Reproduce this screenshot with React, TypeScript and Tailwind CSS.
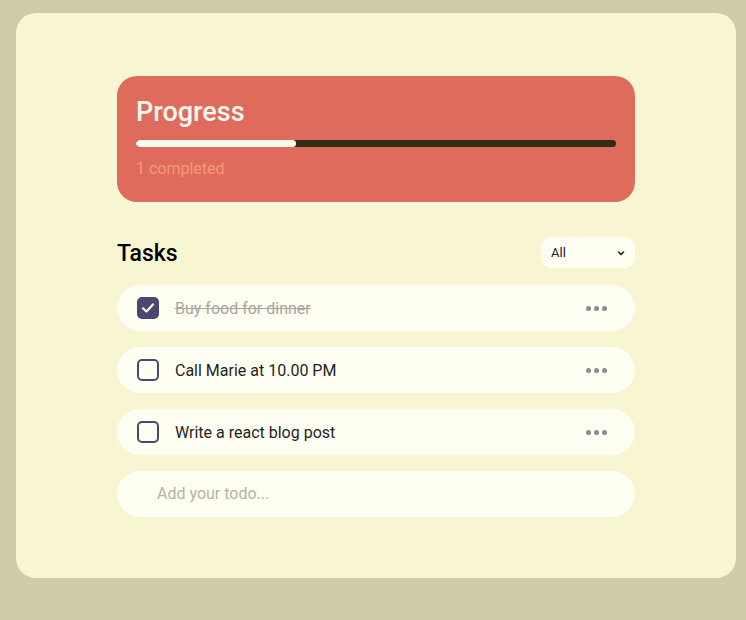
import React, { useState } from "react";

type Todo = { id: number; text: string; done: boolean };

function Dots() {
  return (
    <div className="flex items-center gap-[3px] pr-[1px]">
      <span className="w-[5px] h-[5px] rounded-full bg-[#8a8a94]" />
      <span className="w-[5px] h-[5px] rounded-full bg-[#8a8a94]" />
      <span className="w-[5px] h-[5px] rounded-full bg-[#8a8a94]" />
    </div>
  );
}

function Row({ todo }: { todo: Todo }) {
  return (
    <div className="h-[46px] rounded-[23px] bg-[#fffef2] flex items-center pl-[20px] pr-[27px]">
      {todo.done ? (
        <span className="w-[22px] h-[22px] rounded-[5px] bg-[#4b4770] flex items-center justify-center">
          <svg width="16" height="16" viewBox="0 0 16 16" fill="none">
            <path d="M3 8.3 L6.4 11.5 L13 4.4" stroke="#fff" strokeWidth="2.2" strokeLinecap="round" strokeLinejoin="round" />
          </svg>
        </span>
      ) : (
        <span className="w-[22px] h-[22px] rounded-[5px] border-2 border-[#4b4770] bg-transparent" />
      )}
      <span
        className={
          todo.done
            ? "ml-[16px] pt-[2px] flex-1 text-[16px] text-[#a8a79e] line-through"
            : "ml-[16px] pt-[2px] flex-1 text-[16px] text-[#1f1f1f]"
        }
      >
        {todo.text}
      </span>
      <Dots />
    </div>
  );
}

export default function App() {
  const [todos] = useState<Todo[]>([
    { id: 1, text: "Buy food for dinner", done: true },
    { id: 2, text: "Call Marie at 10.00 PM", done: false },
    { id: 3, text: "Write a react blog post", done: false },
  ]);
  return (
    <div
      className="w-[746px] h-[620px] bg-[#cfcca7] pt-[13px] pl-[16px]"
      style={{ fontFamily: "Roboto, 'Noto Sans', sans-serif" }}
    >
      <div className="w-[720px] h-[565px] rounded-[20px] bg-[#f8f6d2] pt-[63px] px-[101px]">
        <div className="h-[126px] rounded-[20px] bg-[#df6b5c] pt-[17px] px-[19px]">
          <div className="text-[27px] leading-[38px] font-medium text-[#fff8f0]">Progress</div>
          <div className="mt-[9px] h-[7px] rounded-full bg-[#342b14] overflow-hidden">
            <div className="h-full w-[33.4%] rounded-full bg-[#fffaf0]" />
          </div>
          <div className="mt-[10px] text-[16px] text-[#f29a79]">1 completed</div>
        </div>

        <div className="mt-[35px] h-[31px] flex items-center justify-between">
          <div className="pt-[3px] text-[23px] font-medium text-black">Tasks</div>
          <div className="w-[94px] h-[31px] rounded-[10px] bg-[#fffef2] flex items-center justify-between pl-[10px] pr-[9px]">
            <span className="text-[13px] text-[#222]">All</span>
            <svg width="10" height="10" viewBox="0 0 10 10" fill="none">
              <path d="M2.5 4 L5 6.5 L7.5 4" stroke="#222" strokeWidth="1.6" strokeLinecap="round" strokeLinejoin="round" />
            </svg>
          </div>
        </div>

        <div className="mt-[17px] flex flex-col gap-[16px]">
          {todos.map((t) => (
            <Row key={t.id} todo={t} />
          ))}
          <div className="h-[46px] rounded-[23px] bg-[#fffef2] flex items-center pl-[40px]">
            <span className="text-[16px] text-[#b4b3a6]">Add your todo...</span>
          </div>
        </div>
      </div>
    </div>
  );
}
